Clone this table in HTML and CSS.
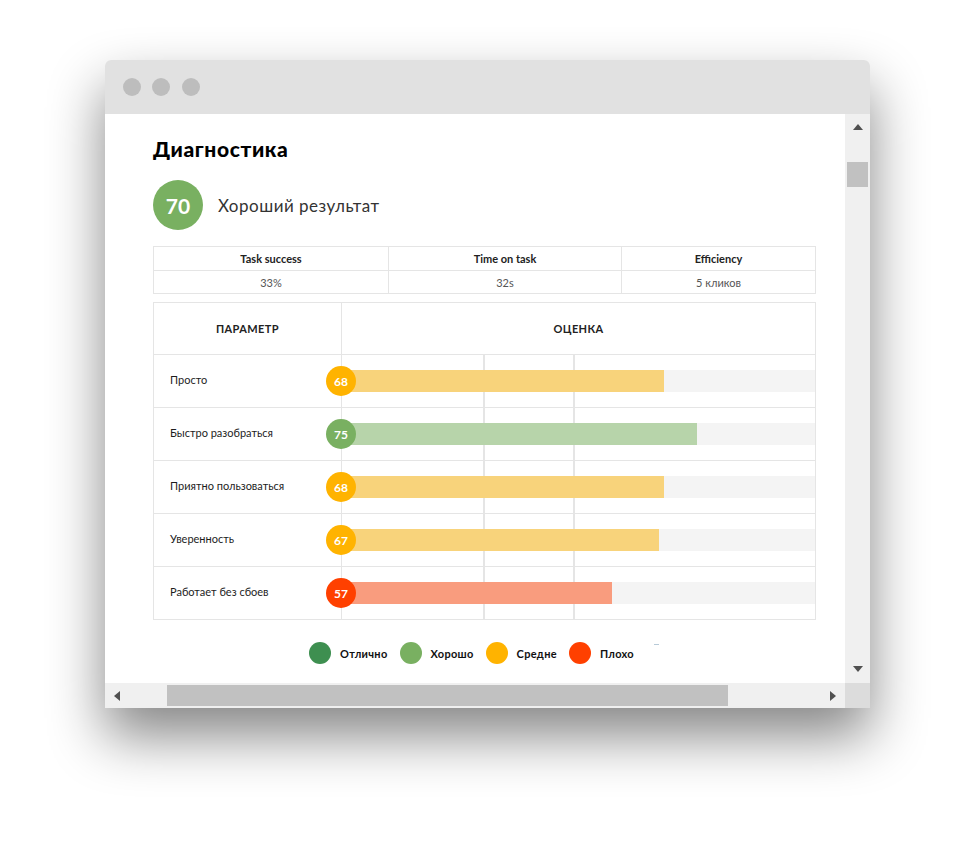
FILE: index.html
```html
<!DOCTYPE html>
<html lang="ru">
<head>
<meta charset="utf-8">
<title>Диагностика</title>
<link rel="stylesheet" href="styles.css">
</head>
<body>
<div class="stage">
  <div class="window">
    <div class="titlebar">
      <span class="dot"></span><span class="dot"></span><span class="dot"></span>
    </div>
    <div class="main">
      <div class="viewport">
        <h1 class="title">Диагностика</h1>
        <div class="score">
          <div class="score-badge">70</div>
          <div class="score-text">Хороший результат</div>
        </div>
        <div class="metrics">
          <div class="m-head">Task success</div>
          <div class="m-head">Time on task</div>
          <div class="m-head">Efficiency</div>
          <div class="m-val">33%</div>
          <div class="m-val">32s</div>
          <div class="m-val">5 кликов</div>
        </div>
        <div class="chart">
          <div class="c-head">Параметр</div>
          <div class="c-head c-right">Оценка</div>

          <div class="c-label">Просто</div>
          <div class="c-bar"><span class="badge mid">68</span><div class="track"><div class="fill mid" style="width:68%"></div></div></div>

          <div class="c-label">Быстро разобраться</div>
          <div class="c-bar"><span class="badge good">75</span><div class="track"><div class="fill good" style="width:75%"></div></div></div>

          <div class="c-label">Приятно пользоваться</div>
          <div class="c-bar"><span class="badge mid">68</span><div class="track"><div class="fill mid" style="width:68%"></div></div></div>

          <div class="c-label">Уверенность</div>
          <div class="c-bar"><span class="badge mid">67</span><div class="track"><div class="fill mid" style="width:67%"></div></div></div>

          <div class="c-label c-last">Работает без сбоев</div>
          <div class="c-bar c-last"><span class="badge bad">57</span><div class="track"><div class="fill bad" style="width:57%"></div></div></div>
        </div>
        <div class="legend">
          <div class="l-item"><span class="l-dot excellent"></span>Отлично</div>
          <div class="l-item"><span class="l-dot good"></span>Хорошо</div>
          <div class="l-item"><span class="l-dot mid"></span>Средне</div>
          <div class="l-item"><span class="l-dot bad"></span>Плохо</div>
          <div class="l-item l-ghost"><span class="l-mark"></span></div>
        </div>
      </div>
      <div class="vscroll">
        <span class="arr arr-up"></span>
        <span class="vthumb"></span>
        <span class="vspace"></span>
        <span class="arr arr-down"></span>
      </div>
    </div>
    <div class="bottom">
      <div class="hscroll">
        <span class="arr arr-left"></span>
        <span class="hthumb"></span>
        <span class="hspace"></span>
        <span class="arr arr-right"></span>
      </div>
      <div class="corner"></div>
    </div>
  </div>
</div>
</body>
</html>
```

FILE: styles.css
```css
* { box-sizing: border-box; }
html, body { margin: 0; padding: 0; background: #ffffff; }
body {
  font-family: Lato, "Noto Sans", "Liberation Sans", sans-serif;
  color: #1d1d1d;
  width: 975px;
  height: 858px;
  overflow: hidden;
}
.stage {
  display: flex;
  justify-content: center;
  padding-top: 60px;
}
.window {
  width: 765px;
  height: 648px;
  border-radius: 6px 6px 0 0;
  background: #ffffff;
  box-shadow: 0 28px 55px rgba(0,0,0,0.48);
  display: flex;
  flex-direction: column;
  overflow: hidden;
}
.titlebar {
  height: 54px;
  background: #e1e1e1;
  display: flex;
  align-items: center;
  gap: 11px;
  padding-left: 18px;
}
.titlebar .dot {
  width: 18px;
  height: 18px;
  border-radius: 50%;
  background: #bdbdbd;
}
.titlebar .dot:nth-child(3) { margin-left: 1px; }
.main {
  display: flex;
  height: 569px;
}
.viewport {
  width: 740px;
  padding: 22px 29px 0 48px;
  overflow: hidden;
}
.title {
  margin: 0;
  font-size: 21px;
  font-weight: 900;
  line-height: 25px;
  color: #000;
  letter-spacing: 0.6px;
}
.score {
  display: flex;
  align-items: center;
  margin-top: 19px;
}
.score-badge {
  width: 50px;
  height: 50px;
  border-radius: 50%;
  background: #79b061;
  color: #fff;
  font-weight: 700;
  font-size: 21px;
  display: flex;
  align-items: center;
  justify-content: center;
}
.score-text {
  margin-left: 15px;
  font-size: 17px;
  color: #333333;
  letter-spacing: 0.5px;
}
.metrics {
  margin-top: 16px;
  display: grid;
  grid-template-columns: 235px 233px 1fr;
  border-top: 1px solid #e5e5e5;
  border-left: 1px solid #e5e5e5;
}
.m-head, .m-val {
  border-right: 1px solid #e5e5e5;
  border-bottom: 1px solid #e5e5e5;
  height: 24px;
  display: flex;
  align-items: center;
  justify-content: center;
  font-size: 11px;
}
.m-head { font-weight: 700; color: #222; height: 24px; }
.m-val { color: #555; height: 23px; }
.chart {
  margin-top: 8px;
  display: grid;
  grid-template-columns: 188px 1fr;
  border-top: 1px solid #e5e5e5;
  border-left: 1px solid #e5e5e5;
  border-right: 1px solid #e5e5e5;
}
.c-head {
  height: 52px;
  display: flex;
  align-items: center;
  justify-content: center;
  font-size: 11px;
  font-weight: 700;
  text-transform: uppercase;
  letter-spacing: 0.4px;
  color: #222;
  border-bottom: 1px solid #e5e5e5;
  border-right: 1px solid #e5e5e5;
}
.c-head.c-right { border-right: none; }
.c-label {
  height: 53px;
  display: flex;
  align-items: center;
  padding-left: 16px;
  padding-bottom: 3px;
  font-size: 11px;
  color: #1d1d1d;
  border-bottom: 1px solid #e5e5e5;
  border-right: 1px solid #e5e5e5;
}
.c-bar {
  position: relative;
  height: 53px;
  display: flex;
  align-items: center;
  border-bottom: 1px solid #e5e5e5;
  background:
    linear-gradient(to right, transparent 141px, #e5e5e5 141px, #e5e5e5 143px, transparent 143px),
    linear-gradient(to right, transparent 231px, #e5e5e5 231px, #e5e5e5 233px, transparent 233px);
}
.track {
  width: 100%;
  height: 22px;
  background: #f4f4f4;
}
.fill { height: 100%; }
.fill.mid { background: #f8d37b; }
.fill.good { background: #b7d4aa; }
.fill.bad { background: #f99c7e; }
.badge {
  position: absolute;
  left: -16px;
  top: 50%;
  margin-top: -15px;
  width: 30px;
  height: 30px;
  border-radius: 50%;
  color: #fff;
  font-weight: 700;
  font-size: 12px;
  display: flex;
  align-items: center;
  justify-content: center;
  z-index: 1;
}
.badge.mid { background: #ffb300; }
.badge.good { background: #79b061; }
.badge.bad { background: #ff4000; }
.legend {
  margin-top: 22px;
  display: flex;
  justify-content: center;
  gap: 12px;
}
.l-item {
  display: flex;
  align-items: center;
  gap: 9px;
  font-size: 11px;
  font-weight: 700;
  color: #111;
  height: 22px;
  letter-spacing: 0.3px;
}
.l-dot {
  width: 22px;
  height: 22px;
  border-radius: 50%;
}
.l-dot.excellent { background: #3e8f50; }
.l-dot.good { background: #79b061; }
.l-dot.mid { background: #ffb300; }
.l-dot.bad { background: #ff4000; }
.l-ghost {
  width: 14px;
  align-items: flex-start;
  padding-left: 8px;
  padding-top: 2px;
}
.l-mark {
  width: 5px;
  height: 1px;
  background: #b7cad8;
}
.vscroll {
  width: 25px;
  background: #f0f0f0;
  display: flex;
  flex-direction: column;
  align-items: center;
}
.vthumb {
  width: 21px;
  height: 25px;
  background: #c1c1c1;
  margin-top: 32px;
}
.vspace { flex: 1; }
.arr { width: 0; height: 0; display: block; }
.arr-up {
  margin-top: 10px;
  border-left: 5px solid transparent;
  border-right: 5px solid transparent;
  border-bottom: 6px solid #505050;
}
.arr-down {
  margin-bottom: 11px;
  border-left: 5px solid transparent;
  border-right: 5px solid transparent;
  border-top: 6px solid #505050;
}
.bottom {
  display: flex;
  height: 25px;
}
.hscroll {
  width: 740px;
  background: #f0f0f0;
  display: flex;
  align-items: center;
}
.arr-left {
  margin-left: 9px;
  border-top: 5px solid transparent;
  border-bottom: 5px solid transparent;
  border-right: 6px solid #505050;
}
.hthumb {
  margin-left: 47px;
  width: 561px;
  height: 21px;
  background: #c1c1c1;
}
.hspace { flex: 1; }
.arr-right {
  margin-right: 9px;
  border-top: 5px solid transparent;
  border-bottom: 5px solid transparent;
  border-left: 6px solid #505050;
}
.corner {
  width: 25px;
  background: #dcdcdc;
}
```
